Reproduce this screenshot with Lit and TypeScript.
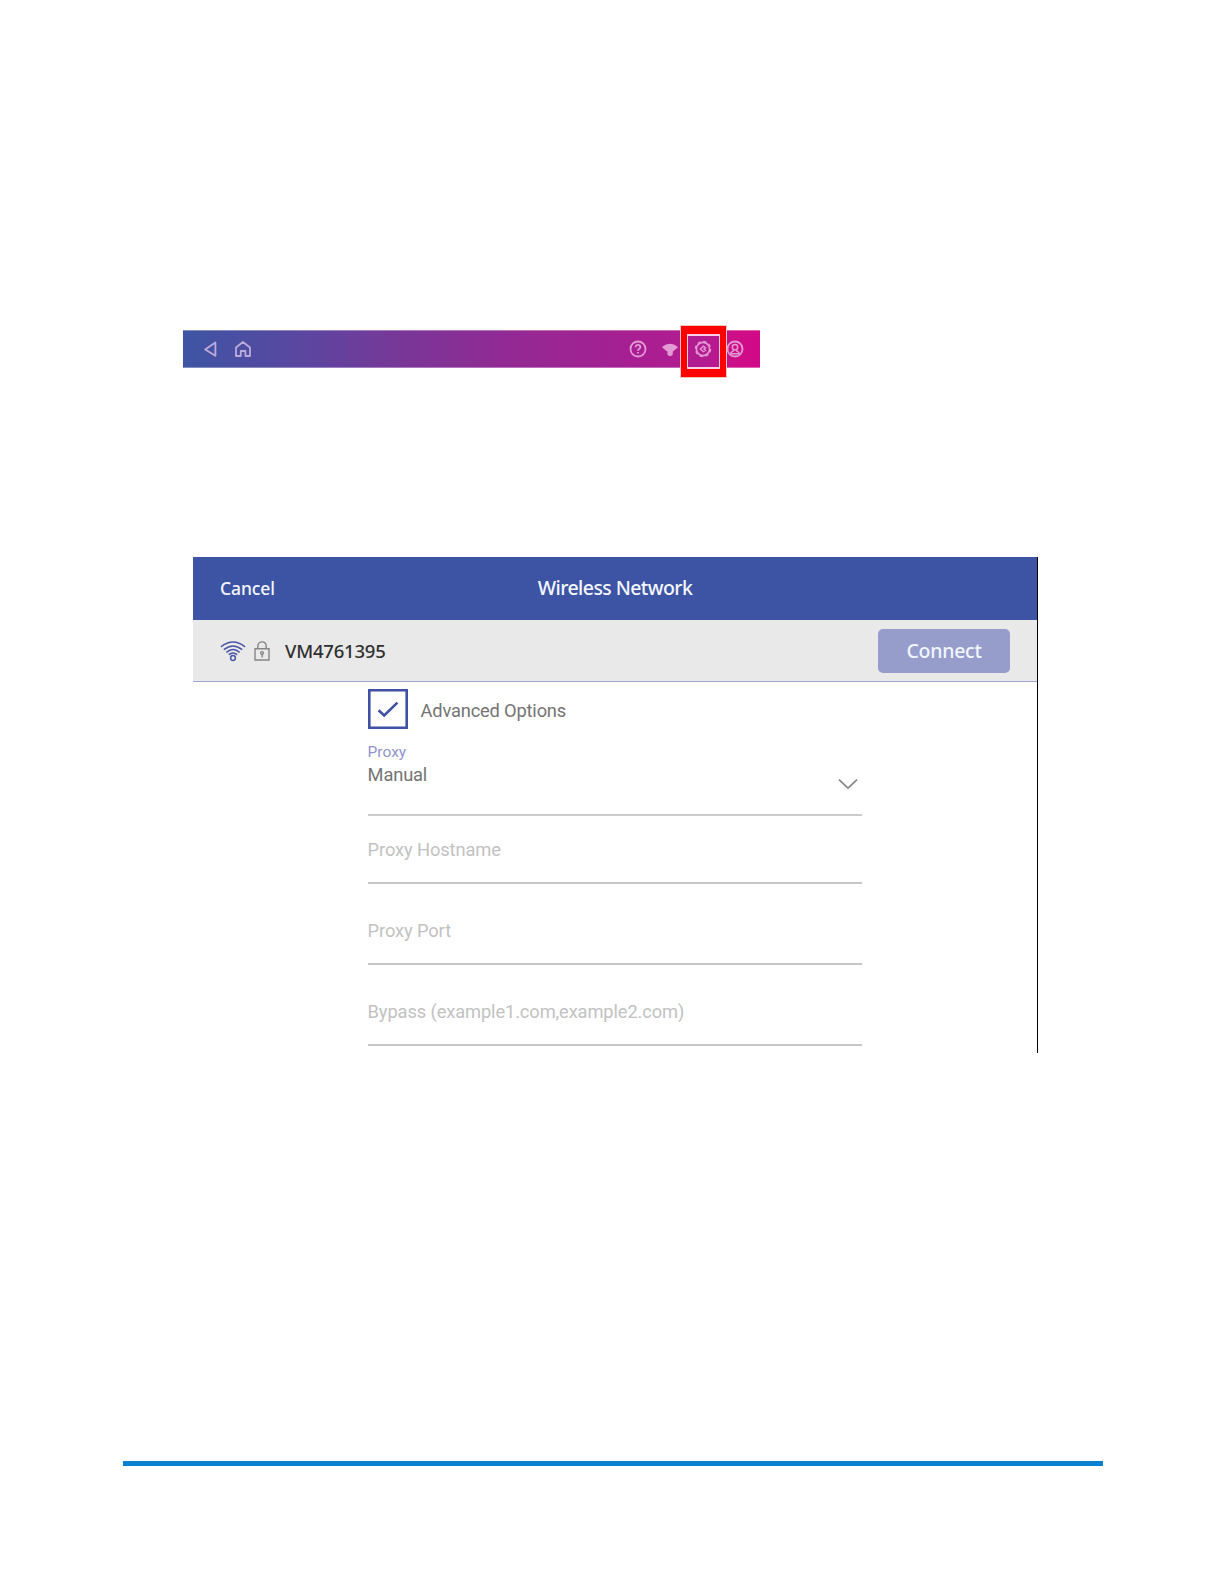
import { LitElement, html, css } from "lit";
import { customElement, property } from "lit/decorators.js";

@customElement("top-toolbar")
class TopToolbar extends LitElement {
  static styles = css`
    :host { display: block; }
    .bar {
      position: relative; box-sizing: border-box; width: 577px; height: 38px; padding: 0 15px 0 18px;
      display: flex; align-items: center; justify-content: space-between;
      border-top: 1px solid rgba(255, 255, 255, 0.35);
      border-bottom: 1px solid rgba(255, 255, 255, 0.35);
      background: linear-gradient(90deg, #3e55a4 0%, #5b46a0 21%, #793797 38%, #912a94 55%, #a71f92 78%, #b41b90 91%, #cf0d88 96%, #d10a87 100%);
    }
    .group { display: flex; gap: 12.4px; }
    .icon { display: block; width: 20px; height: 20px; fill: none; stroke: #bcaadb; stroke-width: 1.8; }
    .group.right .icon { stroke: #e39ad4; }
    .group.right .solid { fill: #e39ad4; stroke: none; }
    .mark {
      position: absolute; left: 497px; top: -6px; box-sizing: border-box; width: 47px; height: 53px;
      border: 1px solid #f3c6c2;
    }
    .mark .red { box-sizing: border-box; height: 100%; border: 8px solid #fe0000; border-left-width: 6px; border-right-width: 6px; }
    .mark .inner { box-sizing: border-box; height: 100%; border: 2px solid #fbd0e2; border-left-width: 1px; border-right-width: 1px; }
  `;
  render() {
    return html`<div class="bar">
      <div class="group">
        <svg class="icon" viewBox="0 0 20 20"><path d="M4.2 10.4 14.4 3.4V16.8Z" stroke-linejoin="round"/></svg>
        <svg class="icon" viewBox="0 0 20 20"><path d="M3 17V8.5L9.9 3 17 8.5V17H12.4V12H7.8V17Z" stroke-linejoin="round"/></svg>
      </div>
      <div class="group right">
        <svg class="icon" viewBox="0 0 20 20"><circle cx="10" cy="10" r="7.5"/><path d="M7.6 8.2C7.6 5 12.5 5.2 12.4 8.1 12.3 9.8 10 9.8 10 11.8M10 13V14.6"/></svg>
        <svg class="icon" viewBox="0 0 20 20"><path class="solid" d="M2 8Q10 1.5 18 8L16.6 9.6Q15.5 10.4 14.5 11.2L12.8 12.4V15.6Q10 19 7.4 15.6V12.4L5.5 11.2Q4.5 10.4 3.4 9.6Z"/></svg>
        <svg class="icon" viewBox="0 0 20 20"><circle cx="10" cy="10" r="6.6" stroke-width="1.6"/><circle cx="10" cy="10" r="7.7" stroke-width="1.1" stroke-dasharray="3.4 2.65"/><path d="M7.2 10 10.4 7.2 12.6 8.8 10.8 10 12.6 11.3 10.4 12.8Z" stroke-width="1.3"/></svg>
        <svg class="icon" viewBox="0 0 20 20"><circle cx="10" cy="10" r="7.5"/><circle cx="10" cy="8.2" r="2.7" stroke-width="1.5"/><path d="M8.6 10.4 8.2 12 5.4 13.8M11.4 10.4 11.8 12 14.6 13.8M5.2 14.8H14.8" stroke-width="1.4"/></svg>
      </div>
      <div class="mark"><div class="red"><div class="inner"></div></div></div>
    </div>`;
  }
}

@customElement("form-field")
class FormField extends LitElement {
  @property() label = "";
  static styles = css`
    :host { display: block; }
    .field {
      box-sizing: border-box; height: 81px; padding-top: 35px; border-bottom: 2px solid #c6c6c6;
      font: 18.3px/24px Roboto, sans-serif; color: #c2c2c2; letter-spacing: -0.11px;
    }
  `;
  render() {
    return html`<div class="field">${this.label}</div>`;
  }
}

@customElement("app-root")
class AppRoot extends LitElement {
  static styles = css`
    :host { display: block; }
    .page {
      box-sizing: border-box; width: 1224px; height: 1584px; padding: 330px 0 0; background: #fff;
      display: flex; flex-direction: column;
    }
    .toolbar { margin-left: 183px; }
    .panel {
      box-sizing: border-box; width: 845px; height: 496px; margin: 189px 0 0 193px; overflow: hidden;
      border-right: 1px solid #000; font-family: "Noto Sans", sans-serif;
    }
    .head {
      height: 63px; box-sizing: border-box; background: #3c54a3; color: #f4f7ff;
      display: grid; grid-template-columns: 1fr auto 1fr; align-items: center; padding: 0 27px 2px;
      line-height: 24px; font-weight: 500;
    }
    .cancel { font-size: 17.5px; padding-top: 1px; letter-spacing: -0.1px; }
    .title { font-size: 19.5px; letter-spacing: -0.58px; }
    .network {
      height: 62px; box-sizing: border-box; background: #e9e9e9; border-bottom: 1px solid #a3a5cf;
      display: flex; align-items: center; padding: 1px 27px 0;
    }
    .wifi { width: 26px; height: 22px; margin-top: 0; fill: none; stroke: #4a55a8; stroke-width: 1.5; }
    .lock { width: 16px; height: 20px; margin-left: 8px; fill: none; stroke: #858585; stroke-width: 1.4; }
    .ssid { margin: 0 0 1px 15px; font-size: 18.5px; font-weight: 500; color: #303030; letter-spacing: -0.2px; }
    .connect {
      margin-left: auto; width: 132px; height: 44px; border-radius: 5px; background: #969dcb; color: #f1f6ff;
      font-size: 19.5px; font-weight: 500; line-height: 44px; text-align: center; letter-spacing: -0.25px;
    }
    .form { width: 494.4px; margin-left: 174.6px; padding-top: 7px; font-family: Roboto, sans-serif; color: #747474; }
    .advanced { display: flex; align-items: center; gap: 13px; font-size: 18.3px; letter-spacing: -0.18px; }
    .advanced span { padding-top: 2px; }
    .check { width: 40px; height: 40px; fill: none; stroke: #3f50a5; stroke-width: 2.6; }
    .proxy { box-sizing: border-box; height: 87px; padding-top: 13px; border-bottom: 2px solid #cbcbcb; display: flex; justify-content: space-between; }
    .label { font-size: 15.5px; line-height: 20px; color: #9094cc; }
    .value { font-size: 18.3px; line-height: 26px; letter-spacing: -0.15px; }
    .chevron { width: 20px; height: 12px; margin: 36px 3.5px 0 0; fill: none; stroke: #858585; stroke-width: 1.7; }
    .first { margin-top: -13px; }
    .rule { width: 980px; height: 5px; margin: 408px 0 0 123px; background: #0b7fd0; }
  `;
  render() {
    return html`<main class="page">
      <top-toolbar class="toolbar"></top-toolbar>
      <section class="panel">
        <div class="head"><span class="cancel">Cancel</span><span class="title">Wireless Network</span><span></span></div>
        <div class="network">
          <svg class="wifi" viewBox="0 0 26 22"><path d="M1 6.8Q13-2.6 25 6.8M3.8 9.6Q13 2.2 22.2 9.6M6.4 12.3Q13 6.8 19.6 12.3M8.8 14.7Q13 11.2 17.2 14.7"/><circle cx="13" cy="18" r="2.4"/></svg>
          <svg class="lock" viewBox="0 0 16 20"><path d="M1 7.8H15V19H1ZM3.8 7.8V5.4C3.8-.6 12.2-.6 12.2 5.4V7.8"/><circle cx="8" cy="12" r="1.4"/><path d="M8.2 13V16.4"/></svg>
          <span class="ssid">VM4761395</span>
          <div class="connect">Connect</div>
        </div>
        <div class="form">
          <div class="advanced">
            <svg class="check" viewBox="0 0 40 40"><path d="M1.3 1.3H38.7V38.7H1.3Z"/><path d="M10.6 21.2 16.2 26.4 29.4 13.6"/></svg>
            <span>Advanced Options</span>
          </div>
          <div class="proxy">
            <div><div class="label">Proxy</div><div class="value">Manual</div></div>
            <svg class="chevron" viewBox="0 0 20 12"><path d="M1 1.6 10 10 19 1.6"/></svg>
          </div>
          <form-field class="first" label="Proxy Hostname"></form-field>
          <form-field label="Proxy Port"></form-field>
          <form-field label="Bypass (example1.com,example2.com)"></form-field>
        </div>
      </section>
      <div class="rule"></div>
    </main>`;
  }
}
